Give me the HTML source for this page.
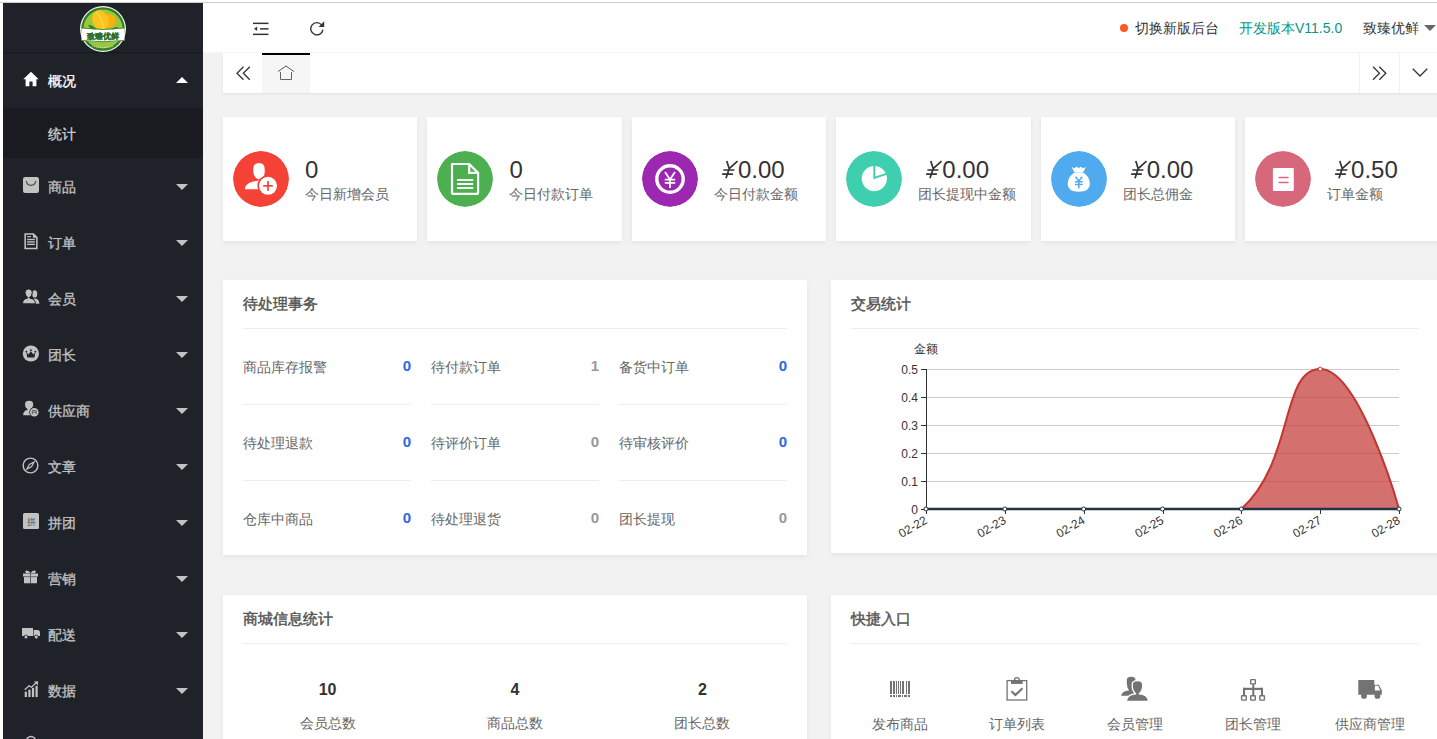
<!DOCTYPE html>
<html><head><meta charset="utf-8">
<style>
*{margin:0;padding:0;box-sizing:border-box}
html,body{width:1437px;height:739px;overflow:hidden;background:#fff;font-family:"Liberation Sans",sans-serif;font-size:14px;color:#333}
.abs{position:absolute}
#topline{position:absolute;left:0;top:2px;width:1437px;height:1px;background:#cdcdcd}
#side{position:absolute;left:3px;top:3px;width:200px;height:736px;background:#20222a;overflow:hidden}
#side .logo{position:absolute;left:0;top:0;width:200px;height:49px;box-shadow:0 1px 1px rgba(0,0,0,.25)}
.mi{position:absolute;left:0;width:200px;height:56px;color:#c2c2c2;font-size:14px;-webkit-text-stroke:0.3px currentColor}
.mi .ic{position:absolute;left:20px;top:20px}
.mi .tx{position:absolute;left:45px;top:1px;line-height:56px;height:56px;white-space:nowrap}
.mi .car{position:absolute;left:173px;top:26px;width:0;height:0;border-left:6px solid transparent;border-right:6px solid transparent;border-top:6px solid #c2c2c2}
.mi.open{color:#fff}
.mi.open .car{border-top:0;border-bottom:6px solid #fff;top:25px}
#sub{position:absolute;left:0;top:105px;width:200px;height:50px;background:#1a1b21}
#sub .tx{position:absolute;left:45px;top:6px;line-height:40px;color:#cfcfcf;font-size:14px;-webkit-text-stroke:0.3px currentColor}
#main{position:absolute;left:203px;top:52px;width:1234px;height:687px;background:#f2f2f2}
#header{position:absolute;left:203px;top:3px;width:1234px;height:49px;background:#fff}
#tabs{position:absolute;left:223px;top:53px;width:1216px;height:40px;background:#fff;box-shadow:0 1px 2px rgba(0,0,0,.08)}
.card{position:absolute;top:117px;width:194.4px;height:124px;background:#fff;box-shadow:0 2px 5px rgba(0,0,0,.06)}
.card .circ{position:absolute;left:10px;top:34px;width:56px;height:56px;border-radius:50%}
.card .val{position:absolute;left:82px;top:34.5px;font-size:24px;line-height:36px;color:#333;white-space:pre}
.card .lab{position:absolute;left:82px;top:68px;font-size:14px;line-height:18px;color:#666;white-space:nowrap}
.hdt{top:16px;font-size:14px;line-height:18px;white-space:nowrap}
.panel{position:absolute;background:#fff;box-shadow:0 2px 5px rgba(0,0,0,.06)}
.panel .ttl{position:absolute;left:20px;top:13.5px;font-size:15px;line-height:20px;font-weight:normal;-webkit-text-stroke:0.45px currentColor;color:#555}
.panel .div{position:absolute;left:20px;top:48px;height:1px;background:#ededed}
.task{position:absolute;width:168px;height:24px}
.task .tt{position:absolute;left:0;top:0;line-height:24px;font-size:14px;color:#666;white-space:nowrap}
.task .tv{position:absolute;right:0;top:-1.5px;line-height:24px;font-size:15px;font-weight:bold}
.info{position:absolute;top:84.5px;width:120px;text-align:center}
.info .iv{font-size:16px;line-height:20px;font-weight:bold;color:#333}
.info .il{font-size:14px;line-height:18px;color:#666;margin-top:14px}
.qe{position:absolute;top:78px;width:120px;text-align:center}
.qe .qi{height:30px}
.qe .ql{font-size:14px;line-height:18px;color:#666;margin-top:12px}
</style></head><body>
<div id="topline"></div>
<div id="main"></div>
<div class="abs" style="left:203px;top:52px;width:1234px;height:1px;background:#f6f6f6"></div>
<div id="header">
  <svg class="abs" style="left:50px;top:19px" width="16" height="14" viewBox="0 0 16 14">
    <rect x="0" y="0.6" width="15.5" height="1.5" fill="#333"/>
    <rect x="7" y="6.1" width="8.5" height="1.5" fill="#333"/>
    <rect x="0" y="11.6" width="15.5" height="1.5" fill="#333"/>
    <path d="M1 6.85 L4.2 4.6 L4.2 9.1 Z" fill="#333"/>
  </svg>
  <svg class="abs" style="left:107px;top:17.3px" width="16" height="16" viewBox="0 0 16 16">
    <path d="M12.9 9.6 A6.1 6.1 0 1 1 11.6 4.9" fill="none" stroke="#333" stroke-width="1.4"/>
    <path d="M14.2 1.3 L14.2 6.9 L8.6 6.9 Z" fill="#333"/>
  </svg>
  <span class="abs" style="left:917px;top:21px;width:8px;height:8px;border-radius:50%;background:#ff5722"></span>
  <span class="abs hdt" style="left:932px;color:#333">切换新版后台</span>
  <span class="abs hdt" style="left:1036px;color:#009688">开发版本V11.5.0</span>
  <span class="abs hdt" style="left:1160px;color:#333">致臻优鲜</span>
  <i class="abs" style="left:1221px;top:22px;width:0;height:0;border-left:6px solid transparent;border-right:6px solid transparent;border-top:6px solid #666"></i>
</div>
<div id="tabs">
  <svg class="abs" style="left:13px;top:13px" width="15" height="15" viewBox="0 0 15 15"><path d="M7.5 0.8 L1 7.3 L7.5 13.8 M13.8 0.8 L7.3 7.3 L13.8 13.8" fill="none" stroke="#333" stroke-width="1.3"/></svg>
  <div class="abs" style="left:39px;top:0;width:48px;height:40px;background:#f6f6f6;border-top:2px solid #000"></div>
  <svg class="abs" style="left:54px;top:12px" width="18" height="16" viewBox="0 0 18 16"><path d="M1 6.6 L9 1 L17 6.6" fill="none" stroke="#444" stroke-width="0.9"/><path d="M3.5 7 V14.5 H14.5 V7" fill="none" stroke="#555" stroke-width="0.9"/></svg>
  <div class="abs" style="left:1136px;top:0;width:1px;height:40px;background:#f2f2f2"></div>
  <div class="abs" style="left:1176px;top:0;width:1px;height:40px;background:#f2f2f2"></div>
  <svg class="abs" style="left:1149px;top:13px" width="15" height="15" viewBox="0 0 15 15"><path d="M1 0.8 L7.5 7.3 L1 13.8 M7.3 0.8 L13.8 7.3 L7.3 13.8" fill="none" stroke="#333" stroke-width="1.3"/></svg>
  <svg class="abs" style="left:1189px;top:15px" width="16" height="9" viewBox="0 0 16 9"><path d="M0.8 0.8 L8 8 L15.2 0.8" fill="none" stroke="#333" stroke-width="1.3"/></svg>
</div>
<div class="card" style="left:223px">
  <svg class="circ" width="56" height="56" viewBox="0 0 56 56"><circle cx="28" cy="28" r="28" fill="#f44336"/>
    <path d="M20.3 18 Q20.3 12 26 12 Q31.7 12 31.7 18 L31.7 21 Q31.7 26.5 26 28.6 Q20.3 26.5 20.3 21 Z" fill="#fff"/><path d="M11.8 38.2 C12.3 33.5 16.5 31 23.5 30 L26 29.6 L31 30 L30 38.2 Z" fill="#fff"/>
    <circle cx="35" cy="34.8" r="10.6" fill="#f44336"/>
    <circle cx="35" cy="34.8" r="9" fill="#fff"/>
    <rect x="30.2" y="34" width="9.6" height="1.7" fill="#f44336"/><rect x="34.15" y="30" width="1.7" height="9.8" fill="#f44336"/>
  </svg>
  <div class="val">0</div><div class="lab">今日新增会员</div>
</div>
<div class="card" style="left:427.4px">
  <svg class="circ" width="56" height="56" viewBox="0 0 56 56"><circle cx="28" cy="28" r="28" fill="#4caf50"/>
    <path d="M15 13 H32.2 L41.1 21.9 V41.8 Q41.1 42.9 40 42.9 H16 Q15 42.9 15 41.8 Z" fill="none" stroke="#fff" stroke-width="2.2" stroke-linejoin="round"/>
    <path d="M32.2 13 V21.9 H41.1" fill="none" stroke="#fff" stroke-width="2.2"/>
    <rect x="20" y="28" width="16.2" height="2" fill="#fff"/><rect x="20" y="32" width="16.2" height="2" fill="#fff"/><rect x="20" y="36" width="16.2" height="2" fill="#fff"/>
  </svg>
  <div class="val">0</div><div class="lab">今日付款订单</div>
</div>
<div class="card" style="left:631.8px">
  <svg class="circ" width="56" height="56" viewBox="0 0 56 56"><circle cx="28" cy="28" r="28" fill="#9c27b0"/>
    <circle cx="28" cy="28" r="13.2" fill="none" stroke="#fff" stroke-width="3.4"/>
    <path d="M23 21 L28 28.5 L33 21 M22.8 28.6 H33.2 M22.8 31.8 H33.2 M28 28.5 V37" fill="none" stroke="#fff" stroke-width="1.8"/>
  </svg>
  <svg class="abs" style="left:86.2px;top:41.3px" width="24" height="24" viewBox="0 0 24 24"><path d="M8.8 3.1 L11.2 10.7 L8 20.3 M19.5 3.1 L11.2 10.7 M5.4 12 H16.4 M4.1 16.1 H14.9" fill="none" stroke="#333" stroke-width="1.7"/></svg><div class="val" style="left:106.1px">0.00</div><div class="lab">今日付款金额</div>
</div>
<div class="card" style="left:836.2px">
  <svg class="circ" width="56" height="56" viewBox="0 0 56 56"><circle cx="28" cy="28" r="28" fill="#3dcfae"/>
    <circle cx="28.3" cy="27.6" r="12.6" fill="#fff"/>
    <path d="M28.3 13 V27 L42 22.4" fill="none" stroke="#3dcfae" stroke-width="1.9"/>
  </svg>
  <svg class="abs" style="left:86.2px;top:41.3px" width="24" height="24" viewBox="0 0 24 24"><path d="M8.8 3.1 L11.2 10.7 L8 20.3 M19.5 3.1 L11.2 10.7 M5.4 12 H16.4 M4.1 16.1 H14.9" fill="none" stroke="#333" stroke-width="1.7"/></svg><div class="val" style="left:106.1px">0.00</div><div class="lab">团长提现中金额</div>
</div>
<div class="card" style="left:1040.6px">
  <svg class="circ" width="56" height="56" viewBox="0 0 56 56"><circle cx="28" cy="28" r="28" fill="#4faaee"/>
    <path d="M20.6 16 L23.5 17.2 L25.5 15.8 L27.8 17 L30 15.8 L32 17.2 L34.9 16 L32.4 21 H23.2 Z" fill="#fff"/>
    <path d="M24 21.2 H31.6 Q39 25 38.9 33 Q38.8 40.8 27.8 40.8 Q16.7 40.8 16.7 33 Q16.7 25 24 21.2 Z" fill="#fff"/>
    <path d="M24.5 25.8 L27.8 30 L31.1 25.8 M24 30.8 H31.6 M24 33.6 H31.6 M27.8 30 V37.6" fill="none" stroke="#4faaee" stroke-width="1.5"/>
  </svg>
  <svg class="abs" style="left:86.2px;top:41.3px" width="24" height="24" viewBox="0 0 24 24"><path d="M8.8 3.1 L11.2 10.7 L8 20.3 M19.5 3.1 L11.2 10.7 M5.4 12 H16.4 M4.1 16.1 H14.9" fill="none" stroke="#333" stroke-width="1.7"/></svg><div class="val" style="left:106.1px">0.00</div><div class="lab">团长总佣金</div>
</div>
<div class="card" style="left:1245px">
  <svg class="circ" width="56" height="56" viewBox="0 0 56 56"><circle cx="28" cy="28" r="28" fill="#d7687b"/>
    <rect x="17.9" y="16.9" width="20.9" height="23" rx="1.2" fill="#fff"/>
    <path d="M24.3 26.5 H32.9 M24.3 31.5 H32.9" stroke="#d7687b" stroke-width="1.7" stroke-linecap="round"/>
  </svg>
  <svg class="abs" style="left:86.2px;top:41.3px" width="24" height="24" viewBox="0 0 24 24"><path d="M8.8 3.1 L11.2 10.7 L8 20.3 M19.5 3.1 L11.2 10.7 M5.4 12 H16.4 M4.1 16.1 H14.9" fill="none" stroke="#333" stroke-width="1.7"/></svg><div class="val" style="left:106.1px">0.50</div><div class="lab">订单金额</div>
</div>
<div class="panel" style="left:223px;top:280px;width:584px;height:275px">
  <div class="ttl">待处理事务</div><div class="div" style="width:544px"></div>
  <div class="task" style="left:20px;top:75px"><span class="tt">商品库存报警</span><span class="tv" style="color:#2f66e8">0</span></div>
  <div class="div" style="left:20px;top:124px;width:168px"></div>
  <div class="task" style="left:208px;top:75px"><span class="tt">待付款订单</span><span class="tv" style="color:#999">1</span></div>
  <div class="div" style="left:208px;top:124px;width:168px"></div>
  <div class="task" style="left:396px;top:75px"><span class="tt">备货中订单</span><span class="tv" style="color:#2f66e8">0</span></div>
  <div class="div" style="left:396px;top:124px;width:168px"></div>
  <div class="task" style="left:20px;top:151px"><span class="tt">待处理退款</span><span class="tv" style="color:#2f66e8">0</span></div>
  <div class="div" style="left:20px;top:200px;width:168px"></div>
  <div class="task" style="left:208px;top:151px"><span class="tt">待评价订单</span><span class="tv" style="color:#999">0</span></div>
  <div class="div" style="left:208px;top:200px;width:168px"></div>
  <div class="task" style="left:396px;top:151px"><span class="tt">待审核评价</span><span class="tv" style="color:#2f66e8">0</span></div>
  <div class="div" style="left:396px;top:200px;width:168px"></div>
  <div class="task" style="left:20px;top:227px"><span class="tt">仓库中商品</span><span class="tv" style="color:#2f66e8">0</span></div>
  <div class="task" style="left:208px;top:227px"><span class="tt">待处理退货</span><span class="tv" style="color:#999">0</span></div>
  <div class="task" style="left:396px;top:227px"><span class="tt">团长提现</span><span class="tv" style="color:#999">0</span></div>
</div>
<div class="panel" style="left:831px;top:280px;width:608px;height:273px">
  <div class="ttl">交易统计</div><div class="div" style="width:568px"></div>
  <svg class="abs" style="left:0;top:0" width="608" height="273" id="chart"><line x1="90" y1="229.50" x2="95.5" y2="229.50" stroke="#333" stroke-width="1"/>
<text x="87" y="234.20" text-anchor="end" font-size="12" fill="#333">0</text>
<line x1="95" y1="201.50" x2="568.00" y2="201.50" stroke="#ccc" stroke-width="1"/>
<line x1="90" y1="201.50" x2="95.5" y2="201.50" stroke="#333" stroke-width="1"/>
<text x="87" y="206.20" text-anchor="end" font-size="12" fill="#333">0.1</text>
<line x1="95" y1="173.50" x2="568.00" y2="173.50" stroke="#ccc" stroke-width="1"/>
<line x1="90" y1="173.50" x2="95.5" y2="173.50" stroke="#333" stroke-width="1"/>
<text x="87" y="178.20" text-anchor="end" font-size="12" fill="#333">0.2</text>
<line x1="95" y1="145.50" x2="568.00" y2="145.50" stroke="#ccc" stroke-width="1"/>
<line x1="90" y1="145.50" x2="95.5" y2="145.50" stroke="#333" stroke-width="1"/>
<text x="87" y="150.20" text-anchor="end" font-size="12" fill="#333">0.3</text>
<line x1="95" y1="117.50" x2="568.00" y2="117.50" stroke="#ccc" stroke-width="1"/>
<line x1="90" y1="117.50" x2="95.5" y2="117.50" stroke="#333" stroke-width="1"/>
<text x="87" y="122.20" text-anchor="end" font-size="12" fill="#333">0.4</text>
<line x1="95" y1="89.50" x2="568.00" y2="89.50" stroke="#ccc" stroke-width="1"/>
<line x1="90" y1="89.50" x2="95.5" y2="89.50" stroke="#333" stroke-width="1"/>
<text x="87" y="94.20" text-anchor="end" font-size="12" fill="#333">0.5</text>
<text x="83" y="73.00" font-size="12" fill="#333">金额</text>
<path d="M95.00 229.00 C95.00 229.00 134.42 229.00 173.83 229.00 C213.25 229.00 213.25 229.00 252.67 229.00 C292.08 229.00 292.08 229.00 331.50 229.00 C370.92 229.00 384.39 229.00 410.33 229.00 C463.22 182.04 449.75 89.00 489.17 89.00 C528.58 89.00 568.00 229.00 568.00 229.00 L568.00 229 L95.00 229 Z" fill="#c23531" fill-opacity="0.7"/>
<path d="M95.00 229.00 C95.00 229.00 134.42 229.00 173.83 229.00 C213.25 229.00 213.25 229.00 252.67 229.00 C292.08 229.00 292.08 229.00 331.50 229.00 C370.92 229.00 384.39 229.00 410.33 229.00 C463.22 182.04 449.75 89.00 489.17 89.00 C528.58 89.00 568.00 229.00 568.00 229.00" fill="none" stroke="#c23531" stroke-width="2"/>
<line x1="95.5" y1="89.00" x2="95.5" y2="229" stroke="#333" stroke-width="1"/>
<line x1="95" y1="229" x2="568.00" y2="229" stroke="#223548" stroke-width="2.4"/>
<line x1="95.50" y1="229" x2="95.50" y2="234" stroke="#333" stroke-width="1"/>
<text transform="translate(95.00 239) rotate(-30)" x="0" y="4.2" text-anchor="end" font-size="12" fill="#333">02-22</text>
<line x1="174.50" y1="229" x2="174.50" y2="234" stroke="#333" stroke-width="1"/>
<text transform="translate(173.83 239) rotate(-30)" x="0" y="4.2" text-anchor="end" font-size="12" fill="#333">02-23</text>
<line x1="253.50" y1="229" x2="253.50" y2="234" stroke="#333" stroke-width="1"/>
<text transform="translate(252.67 239) rotate(-30)" x="0" y="4.2" text-anchor="end" font-size="12" fill="#333">02-24</text>
<line x1="332.50" y1="229" x2="332.50" y2="234" stroke="#333" stroke-width="1"/>
<text transform="translate(331.50 239) rotate(-30)" x="0" y="4.2" text-anchor="end" font-size="12" fill="#333">02-25</text>
<line x1="410.50" y1="229" x2="410.50" y2="234" stroke="#333" stroke-width="1"/>
<text transform="translate(410.33 239) rotate(-30)" x="0" y="4.2" text-anchor="end" font-size="12" fill="#333">02-26</text>
<line x1="489.50" y1="229" x2="489.50" y2="234" stroke="#333" stroke-width="1"/>
<text transform="translate(489.17 239) rotate(-30)" x="0" y="4.2" text-anchor="end" font-size="12" fill="#333">02-27</text>
<line x1="568.50" y1="229" x2="568.50" y2="234" stroke="#333" stroke-width="1"/>
<text transform="translate(568.00 239) rotate(-30)" x="0" y="4.2" text-anchor="end" font-size="12" fill="#333">02-28</text>
<circle cx="95.00" cy="229.00" r="2" fill="#fff" stroke="#223548" stroke-width="1"/>
<circle cx="173.83" cy="229.00" r="2" fill="#fff" stroke="#223548" stroke-width="1"/>
<circle cx="252.67" cy="229.00" r="2" fill="#fff" stroke="#223548" stroke-width="1"/>
<circle cx="331.50" cy="229.00" r="2" fill="#fff" stroke="#223548" stroke-width="1"/>
<circle cx="410.33" cy="229.00" r="2" fill="#fff" stroke="#223548" stroke-width="1"/>
<circle cx="489.17" cy="89.00" r="2" fill="#fff" stroke="#c23531" stroke-width="1"/>
<circle cx="568.00" cy="229.00" r="2" fill="#fff" stroke="#223548" stroke-width="1"/></svg>
</div>
<div class="panel" style="left:223px;top:595px;width:584px;height:160px">
  <div class="ttl">商城信息统计</div><div class="div" style="width:544px"></div>
  <div class="info" style="left:44.599999999999994px"><div class="iv">10</div><div class="il">会员总数</div></div>
  <div class="info" style="left:232px"><div class="iv">4</div><div class="il">商品总数</div></div>
  <div class="info" style="left:419.4px"><div class="iv">2</div><div class="il">团长总数</div></div>
</div>
<div class="panel" style="left:831px;top:595px;width:608px;height:160px">
  <div class="ttl">快捷入口</div><div class="div" style="width:568px"></div>
  <div class="qe" style="left:9.299999999999997px"><div class="qi"></div><div class="ql">发布商品</div></div>
  <div class="qe" style="left:125.6px"><div class="qi"></div><div class="ql">订单列表</div></div>
  <div class="qe" style="left:243.7px"><div class="qi"></div><div class="ql">会员管理</div></div>
  <div class="qe" style="left:361.8px"><div class="qi"></div><div class="ql">团长管理</div></div>
  <div class="qe" style="left:478.6px"><div class="qi"></div><div class="ql">供应商管理</div></div>
</div>
<!--QE--><svg class="abs" style="left:0;top:0" width="1437" height="739"><rect x="890" y="681" width="2" height="13" fill="#737373"/><rect x="893" y="681" width="2" height="13" fill="#737373"/><rect x="896" y="681" width="1" height="13" fill="#737373"/><rect x="898" y="681" width="1" height="13" fill="#737373"/><rect x="900" y="681" width="1" height="13" fill="#737373"/><rect x="902" y="681" width="2" height="13" fill="#737373"/><rect x="906" y="681" width="1" height="13" fill="#737373"/><rect x="908" y="681" width="2" height="13" fill="#737373"/><rect x="890" y="695" width="2" height="2" fill="#737373"/><rect x="893" y="695" width="2" height="2" fill="#737373"/><rect x="896" y="695" width="1" height="2" fill="#737373"/><rect x="898" y="695" width="3" height="2" fill="#737373"/><rect x="902" y="695" width="1" height="2" fill="#737373"/><rect x="904" y="695" width="3" height="2" fill="#737373"/><rect x="908" y="695" width="2" height="2" fill="#737373"/><rect x="1007.1" y="680.6" width="19.6" height="19.4" fill="none" stroke="#737373" stroke-width="1.3"/><rect x="1011" y="680.6" width="11.7" height="3.3" fill="#737373"/><circle cx="1016.9" cy="680" r="2.4" fill="none" stroke="#737373" stroke-width="1.3"/><path d="M1011.5 691.2 L1015.4 695 L1022.5 688.3" fill="none" stroke="#737373" stroke-width="2.1"/><path d="M1121 695.8 Q1122 691 1129 690.5 Q1126.8 688 1126.8 683 L1126.8 680 Q1127 676.8 1131 676.8 Q1135.5 676.8 1135.5 680 L1135.5 683 Q1135.5 688 1133 690.5 Q1134 691 1135 691.5 L1133 695.8 Z" fill="#737373"/><path d="M1127 700.8 Q1128 695 1136 694.6 L1136.3 693.5 Q1132.9 691 1132.9 686 L1132.9 684.5 Q1132.9 681.3 1137.45 681.3 Q1142 681.3 1142 684.5 L1142 686 Q1142 691 1138.6 693.5 L1138.9 694.6 Q1147 695 1147.8 700.8 Z" fill="#fff" stroke="#fff" stroke-width="2.6"/><path d="M1127 700.8 Q1128 695 1136 694.6 L1136.3 693.5 Q1132.9 691 1132.9 686 L1132.9 684.5 Q1132.9 681.3 1137.45 681.3 Q1142 681.3 1142 684.5 L1142 686 Q1142 691 1138.6 693.5 L1138.9 694.6 Q1147 695 1147.8 700.8 Z" fill="#737373"/><rect x="1250.7" y="679.6" width="4.6" height="4.3" rx="0.5" fill="none" stroke="#737373" stroke-width="1.4"/><rect x="1241.6000000000001" y="695.8000000000001" width="4.6" height="4.3" rx="0.5" fill="none" stroke="#737373" stroke-width="1.4"/><rect x="1250.7" y="695.8000000000001" width="4.6" height="4.3" rx="0.5" fill="none" stroke="#737373" stroke-width="1.4"/><rect x="1259.8" y="695.8000000000001" width="4.6" height="4.3" rx="0.5" fill="none" stroke="#737373" stroke-width="1.4"/><rect x="1252.3" y="684.2" width="2" height="11" fill="#737373"/><rect x="1243" y="687.8" width="20" height="2.2" fill="#737373"/><rect x="1243" y="687.8" width="2.1" height="7.5" fill="#737373"/><rect x="1260.9" y="687.8" width="2.1" height="7.5" fill="#737373"/><path d="M1358.3 680.8 Q1358.3 680.1 1359 680.1 L1374.3 680.1 L1374.3 684.8 L1378.8 684.8 L1381.8 690.2 L1381.8 694.7 L1358.3 694.7 Z" fill="#737373"/><path d="M1374.9 685.8 L1378.2 685.8 L1380.3 690.6 L1374.9 690.6 Z" fill="#fff"/><circle cx="1364" cy="695.9" r="2.9" fill="#737373"/><circle cx="1377.4" cy="695.9" r="2.9" fill="#737373"/></svg><!--/QE-->
<div id="side">
  <div class="logo">
    <svg class="abs" style="left:77px;top:3px" width="46" height="46" viewBox="0 0 46 46">
      <ellipse cx="23" cy="23" rx="23" ry="23" fill="#f4f7ee"/>
      <ellipse cx="23" cy="23" rx="21.8" ry="21.8" fill="#2f7d2e"/>
      <ellipse cx="23" cy="23" rx="19.6" ry="19.6" fill="#9ac83a"/>
      
      <ellipse cx="28" cy="15" rx="8" ry="7" fill="#f9b10c"/>
      <ellipse cx="20.5" cy="14" rx="8" ry="10" fill="#fcc51e" transform="rotate(-25 20.5 14)"/>
      <path d="M16 6 Q22 12 24 23" fill="none" stroke="#ffe27a" stroke-width="0.9"/>
      
      <path d="M8 19 Q13 19 17 24 Q11 25 8 19Z" fill="#2e7d32"/>
      <path d="M38 21 Q33 21 28 25 Q34 27 38 21Z" fill="#2e7d32"/>
      <path d="M1.5 22 Q23 25 44.5 22 L44.5 34.5 Q23 37 1.5 34.5 Z" fill="#fff"/>
      <path d="M1.5 22 Q23 25 44.5 22" fill="none" stroke="#3c8a30" stroke-width="0.9"/>
      <path d="M1.5 34.5 Q23 37 44.5 34.5" fill="none" stroke="#3c8a30" stroke-width="0.9"/>
      <text x="23" y="32.6" font-size="7.6" font-weight="bold" fill="#2f6e2b" stroke="#2f6e2b" stroke-width="0.3" text-anchor="middle" font-family="Liberation Sans, sans-serif">致臻优鲜</text>
      <path d="M12 40 Q23 43 34 40" fill="none" stroke="#e8f5d0" stroke-width="0.8" stroke-dasharray="1 1"/>
    </svg>
  </div>
  <!-- 概况 -->
  <div class="mi open" style="top:49px">
    <svg class="ic" style="left:20px;top:19px" width="16" height="16" viewBox="0 0 16 16"><path d="M8 0.8 L0.3 8.2 L2.6 8.2 L2.6 15.2 L6.4 15.2 L6.4 10.6 L9.6 10.6 L9.6 15.2 L13.4 15.2 L13.4 8.2 L15.7 8.2 Z" fill="#fff"/></svg>
    <span class="tx">概况</span><i class="car"></i>
  </div>
  <div id="sub"><span class="tx">统计</span></div>
  <!-- 商品 -->
  <div class="mi" style="top:155px">
    <svg class="ic" style="left:20px;top:19px" width="16" height="16" viewBox="0 0 16 16"><rect x="0" y="0" width="16" height="16" rx="2.2" fill="#c2c2c2"/><path d="M3.3 3.9 C3.9 9.8 12.1 9.8 12.7 3.9" stroke="#4a4c52" stroke-width="1.1" fill="none"/></svg>
    <span class="tx">商品</span><i class="car"></i>
  </div>
  <!-- 订单 -->
  <div class="mi" style="top:211px">
    <svg class="ic" style="left:21px;top:19px" width="14" height="16.5" viewBox="0 0 14 17"><path d="M1 1 H9.5 L13 4.5 V16 H1 Z" fill="none" stroke="#c2c2c2" stroke-width="1.6"/><path d="M9 1 V5 H13" fill="#c2c2c2"/><rect x="3" y="6" width="8" height="1.4" fill="#c2c2c2"/><rect x="3" y="8.5" width="8" height="1.4" fill="#c2c2c2"/><rect x="3" y="11" width="8" height="1.4" fill="#c2c2c2"/><rect x="3" y="3.2" width="4" height="1.2" fill="#c2c2c2"/></svg>
    <span class="tx">订单</span><i class="car"></i>
  </div>
  <!-- 会员 -->
  <div class="mi" style="top:267px">
    <svg class="abs" style="left:15px;top:14px" width="26" height="24" viewBox="0 0 26 24"><ellipse cx="16.7" cy="9.9" rx="2.5" ry="3.7" fill="#c2c2c2"/><path d="M12.5 19.8 Q13 15 17 14.5 Q21.2 15 21.4 19.8 Z" fill="#c2c2c2"/><path d="M4.5 19.8 Q4.6 14.8 9.5 14.2 L9.8 13.5 Q7 11.8 7 8.5 Q7 4.9 10.65 4.9 Q14.3 4.9 14.3 8.5 Q14.3 11.8 11.5 13.5 L11.8 14.2 Q17.3 14.8 17.5 19.8 Z" fill="#c2c2c2" stroke="#20222a" stroke-width="1"/></svg>
    <span class="tx">会员</span><i class="car"></i>
  </div>
  <!-- 团长 -->
  <div class="mi" style="top:323px">
    <svg class="ic" style="left:19px;top:19px" width="17" height="17" viewBox="0 0 18 18"><circle cx="9.4" cy="9" r="8.6" fill="#c2c2c2"/><path d="M4.6 7.5 L6.8 10 L9.4 6.6 L12 10 L14.2 7.5 L13.2 13.2 H5.6 Z" fill="#20222a"/><circle cx="4.6" cy="7" r="1" fill="#20222a"/><circle cx="9.4" cy="5.6" r="1" fill="#20222a"/><circle cx="14.2" cy="7" r="1" fill="#20222a"/></svg>
    <span class="tx">团长</span><i class="car"></i>
  </div>
  <!-- 供应商 -->
  <div class="mi" style="top:379px">
    <svg class="ic" style="left:19px;top:17px" width="18" height="18" viewBox="0 0 18 18"><path d="M3 5.2 Q3 1.8 7.1 1.8 Q11.2 1.8 11.2 5.2 Q11.2 8.8 8.5 10 L8.6 10.9 L9.6 10.9 L9.6 16.3 L1.1 16.3 Q1.2 11.5 5.3 10.9 L5.6 10 Q3 8.8 3 5.2 Z" fill="#c2c2c2"/><circle cx="12.3" cy="13.3" r="5" fill="#20222a"/><circle cx="12.3" cy="13.3" r="4.3" fill="#c2c2c2"/><path d="M10.3 15.3 V11.6 H14.3 V15.3 M10.3 13.3 H14.3" fill="none" stroke="#55575c" stroke-width="0.9"/></svg>
    <span class="tx">供应商</span><i class="car"></i>
  </div>
  <!-- 文章 -->
  <div class="mi" style="top:435px">
    <svg class="ic" style="left:19px;top:19px" width="17" height="17" viewBox="0 0 18 18"><circle cx="9" cy="9" r="7.8" fill="none" stroke="#c2c2c2" stroke-width="1.5"/><path d="M12.8 5.2 L10.2 10.2 L5.2 12.8 L7.8 7.8 Z" fill="none" stroke="#c2c2c2" stroke-width="1.3"/></svg>
    <span class="tx">文章</span><i class="car"></i>
  </div>
  <!-- 拼团 -->
  <div class="mi" style="top:491px">
    <svg class="ic" style="left:20px;top:19px" width="16" height="16" viewBox="0 0 16 16"><rect x="0" y="0" width="16" height="16" rx="1.5" fill="#c2c2c2"/><text x="8" y="11.5" font-size="9" fill="#50525a" text-anchor="middle" font-family="Liberation Sans, sans-serif">拼</text></svg>
    <span class="tx">拼团</span><i class="car"></i>
  </div>
  <!-- 营销 -->
  <div class="mi" style="top:547px">
    <svg class="ic" style="left:20px;top:20px" width="15" height="14" viewBox="0 0 15 15" preserveAspectRatio="none"><path d="M3 3.5 Q1 0.5 4 0.5 Q6 0.8 7.5 3.5 Q9 0.8 11 0.5 Q14 0.5 12 3.5 Z" fill="#c2c2c2"/><rect x="0" y="3.8" width="15" height="3.2" fill="#c2c2c2"/><rect x="1" y="7.6" width="13" height="6.6" fill="#c2c2c2"/><rect x="7" y="3.8" width="1" height="10.4" fill="#5a5c62"/></svg>
    <span class="tx">营销</span><i class="car"></i>
  </div>
  <!-- 配送 -->
  <div class="mi" style="top:603px">
    <svg class="ic" style="left:19px;top:22px" width="18" height="11" viewBox="0 0 18 11"><rect x="0" y="0" width="11" height="8" fill="#c2c2c2"/><path d="M11.6 2 H15.5 Q18 2.2 18 5 V8 H11.6 Z" fill="#c2c2c2"/><circle cx="4" cy="9" r="1.9" fill="#c2c2c2" stroke="#20222a" stroke-width="0.8"/><circle cx="14.3" cy="9" r="1.9" fill="#c2c2c2" stroke="#20222a" stroke-width="0.8"/></svg>
    <span class="tx">配送</span><i class="car"></i>
  </div>
  <!-- 数据 -->
  <div class="mi" style="top:659px">
    <svg class="ic" style="left:21px;top:19px" width="15" height="16.5" viewBox="0 0 15 17"><rect x="0.5" y="11" width="2.3" height="5.5" fill="#c2c2c2"/><rect x="4.2" y="9" width="2.3" height="7.5" fill="#c2c2c2"/><rect x="7.9" y="7" width="2.3" height="9.5" fill="#c2c2c2"/><rect x="11.6" y="5" width="2.3" height="11.5" fill="#c2c2c2"/><path d="M0.5 9 L5 5 L7.5 6.5 L12.5 1.5" fill="none" stroke="#c2c2c2" stroke-width="1.3"/><path d="M10 0.6 L14.3 0.3 L14 4.6 Z" fill="#c2c2c2"/></svg>
    <span class="tx">数据</span><i class="car"></i>
  </div>
  <div class="mi" style="top:715px">
    <svg class="ic" style="left:22px;top:17px" width="12" height="12" viewBox="0 0 12 12"><circle cx="6" cy="6" r="4.5" fill="none" stroke="#c2c2c2" stroke-width="1.5"/></svg>
  </div>
</div>
</body></html>
